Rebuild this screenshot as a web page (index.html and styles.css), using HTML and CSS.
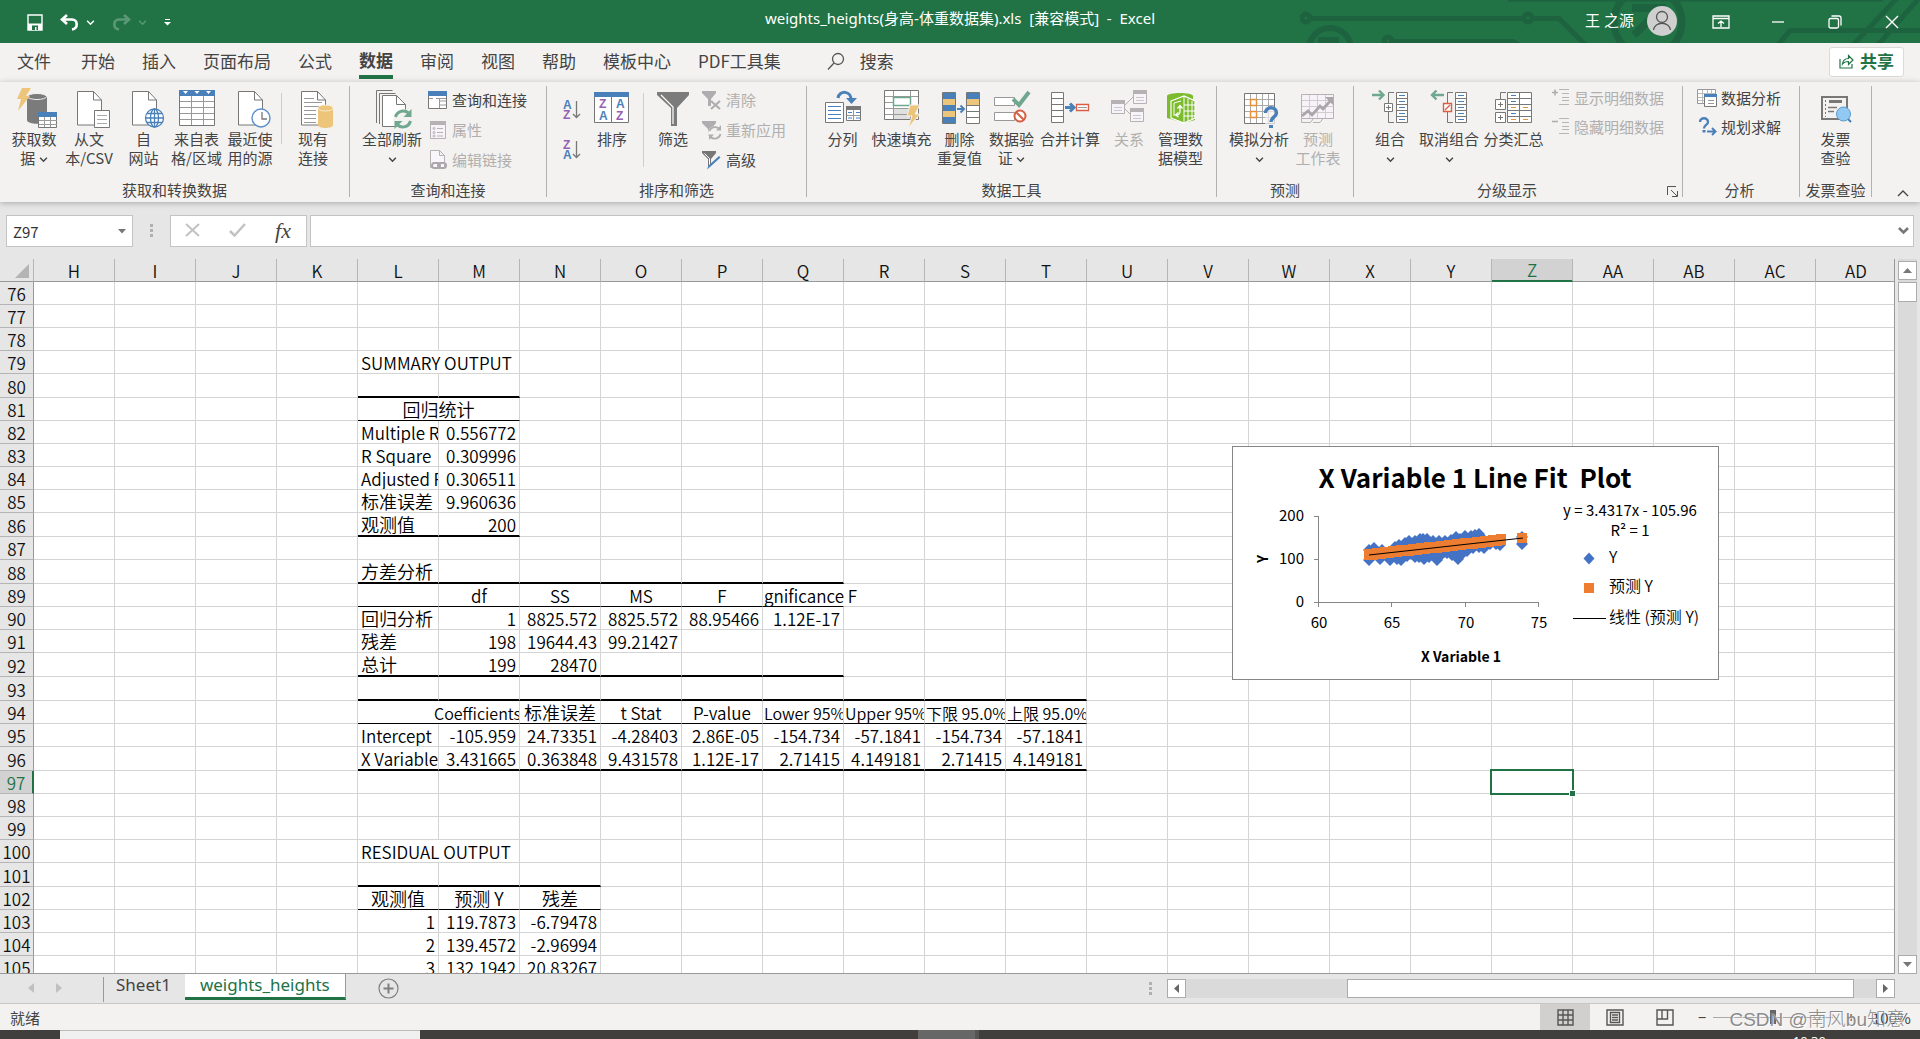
FILE: index.html
```html
<!DOCTYPE html>
<html lang="zh-CN">
<head>
<meta charset="utf-8">
<title>weights_heights(身高-体重数据集).xls - Excel</title>
<link rel="stylesheet" href="styles.css">
</head>
<body>
<svg class="defs" aria-hidden="true">
  <symbol id="page" viewBox="0 0 40 40"><path d="M8.500 3.500h16l8 8.500v25h-24z" fill="#fff" stroke="#777"/><path d="M24.500 3.500v8.500h8" fill="none" stroke="#777"/></symbol>
  <symbol id="down" viewBox="0 0 8 8"><path d="M1 2.500l3 3 3-3" fill="none" stroke="currentColor" stroke-width="1.300"/></symbol>
  <symbol id="funnel" viewBox="0 0 40 40"><path d="M4 4h32v3L24 20v18h-6V20L4 7z" fill="#7b7b7b"/><path d="M8 7l12 12v17" fill="none" stroke="#fff" stroke-width="1.200"/></symbol>
</svg>

<header class="titlebar">
  <svg class="circuit" width="620" height="43" viewBox="1300 0 620 43" aria-hidden="true" fill="none" stroke="#1e633f" stroke-width="5">
    <circle cx="1306" cy="18" r="4"/><path d="M1311 18.500h213M1532 18.500h27l27 27M1393 41.500h120l8 5M1778 45l12-14.500h135M1853 45l45-48M1878 45l42-48"/>
    <circle cx="1330" cy="49" r="21" stroke-width="6"/><path d="M1318 41h21" stroke-width="8"/><circle cx="1388" cy="41" r="4"/><circle cx="1528" cy="18" r="4"/>
    <circle cx="1648" cy="22" r="34" stroke-width="7"/><path d="M1634 35l28-28M1632 8h30v8" stroke-width="8"/><path d="M1508 0h375" stroke-width="3"/>
  </svg>
  <div class="quick">
    <button aria-label="保存"><svg width="16" height="17" viewBox="0 0 16 17"><path d="M1 1h14v15H1z" fill="none" stroke="#fff" stroke-width="1.400"/><path d="M1 9.500h14V16H1z" fill="#fff"/><path d="M5 11.500h6V16H9.500v-3H8v3H5z" fill="#217346"/></svg></button>
    <button class="undo" aria-label="撤消"><svg width="19" height="17" viewBox="0 0 19 17"><path d="M7 1L2 5.500 7 10M2.500 5.500H12c6 0 6.500 9 0 10" fill="none" stroke="#fff" stroke-width="2.600"/></svg><svg width="9" height="9" viewBox="0 0 8 8"><use href="#down"/></svg></button>
    <button class="redo" aria-label="恢复"><svg width="19" height="17" viewBox="0 0 19 17"><path d="M12 1l5 4.500-5 4.500M16.500 5.500H7c-6 0-6.500 9 0 10" fill="none" stroke="currentColor" stroke-width="2.600"/></svg><svg width="9" height="9" viewBox="0 0 8 8"><use href="#down"/></svg></button>
    <button aria-label="自定义快速访问工具栏"><svg width="7" height="7" viewBox="0 0 7 7"><path d="M1 .500h5" stroke="#fff"/><path d="M0 3h7L3.500 6.500z" fill="#fff"/></svg></button>
  </div>
  <h1 class="doc-title">weights_heights(身高-体重数据集).xls&nbsp; [兼容模式]&nbsp; -&nbsp; Excel</h1>
  <div class="account">
    <span>王 之源</span>
    <svg width="30" height="30" viewBox="0 0 30 30"><circle cx="15" cy="15" r="15" fill="#cfcfcf"/><circle cx="15" cy="11" r="5.500" fill="none" stroke="#555" stroke-width="1.300"/><path d="M6.500 24c1-9 16-9 17 0" fill="none" stroke="#555" stroke-width="1.300"/></svg>
  </div>
  <div class="window-buttons">
    <button aria-label="功能区显示选项"><svg width="18" height="14" viewBox="0 0 18 14" fill="none" stroke="#fff" stroke-width="1.300"><path d="M1 1h16v12H1zM1 3.500h16M9 12V6M6 8.500L9 6l3 2.500"/></svg></button>
    <button aria-label="最小化"><svg width="14" height="14" viewBox="0 0 14 14"><path d="M1 7h12" stroke="#fff" stroke-width="1.300"/></svg></button>
    <button aria-label="还原"><svg width="14" height="14" viewBox="0 0 14 14" fill="none" stroke="#fff" stroke-width="1.300"><rect x="1" y="3.500" width="9.500" height="9.500" rx="1.500"/><path d="M3.500 1H11q2 0 2 2v7.500"/></svg></button>
    <button aria-label="关闭"><svg width="14" height="14" viewBox="0 0 14 14"><path d="M1 1l12 12M13 1L1 13" stroke="#fff" stroke-width="1.400"/></svg></button>
  </div>
</header>

<nav class="tabs">
  <button class="file">文件</button><button>开始</button><button>插入</button><button>页面布局</button><button>公式</button><button class="active">数据</button><button>审阅</button><button>视图</button><button>帮助</button><button>模板中心</button><button>PDF工具集</button>
  <button class="search"><svg width="18" height="18" viewBox="0 0 18 18" fill="none" stroke="#555" stroke-width="1.300"><circle cx="11" cy="7" r="5.500"/><path d="M7 11l-6 6.500"/></svg>搜索</button>
  <button class="share"><svg width="15" height="15" viewBox="0 0 15 15" fill="none" stroke="#217346" stroke-width="1.200"><path d="M1 5v9h12v-4M3.500 10C4 6 6 4.500 9.500 4.500V1.500L14 6l-4.500 4.500V7.500C7 7.500 5 8 3.500 10z"/></svg>共享</button>
</nav>

<section class="ribbon">
  <div class="group g-get">
    <div class="tools">
      <button class="big w54"><svg viewBox="0 0 40 40"><path d="M13 8v24c0 5 20 5 20 0V8z" fill="#7b7b7b"/><ellipse cx="23" cy="8.500" rx="9.500" ry="3" fill="#7b7b7b" stroke="#f3f2f1"/><path d="M8 0h9l-5 8h4L4 23l3-12H3z" fill="#edc57a"/><path d="M24.500 24.500h18v15h-18z" fill="#fff" stroke="#777"/><path d="M24 24h19v5H24z" fill="#4a80ba"/><path d="M30.500 29v10M36.500 29v10M25 32.500h18M25 36.500h18" stroke="#999"/></svg>获取数<br>据 <svg class="dd"><use href="#down"/></svg></button>
      <button class="big w56"><svg viewBox="0 0 40 40"><use href="#page"/><path d="M25.500 22.500h15v17h-15z" fill="#fff" stroke="#777"/><path d="M28 27.500h10M28 31.500h10M28 35.500h10" stroke="#aaa"/></svg>从文<br>本/CSV</button>
      <button class="big w53"><svg viewBox="0 0 40 40"><use href="#page"/><g fill="#fff" stroke="#4a80ba" stroke-width="1.300"><circle cx="30.500" cy="30" r="9"/><ellipse cx="30.500" cy="30" rx="4" ry="9"/><path d="M21.500 30h18M23 25.500h15M23 34.500h15M30.500 21v18"/></g></svg>自<br>网站</button>
      <button class="big w53"><svg viewBox="0 0 40 40"><path d="M2.500 2.500h35v35h-35z" fill="#fff" stroke="#777"/><path d="M2 2h36v6H2z" fill="#4a80ba"/><path d="M6 3h5l-2.500 3zM17.500 3h5L20 6zM29 3h5l-2.500 3z" fill="#fff"/><path d="M14.500 8v29M26.500 8v29M3 13.500h34M3 19.500h34M3 25.500h34M3 31.500h34" stroke="#999"/></svg>来自表<br>格/区域</button>
      <button class="big w54"><svg viewBox="0 0 40 40"><use href="#page"/><circle cx="31" cy="30" r="9" fill="#fff" stroke="#5b8fc9" stroke-width="1.400"/><path d="M32 24v7h5" fill="none" stroke="#777" stroke-width="1.300"/></svg>最近使<br>用的源</button>
      <i class="rule short"></i>
      <button class="big w54"><svg viewBox="0 0 40 40"><use href="#page"/><path d="M11 10.500h10M11 14.500h18M11 18.500h18M11 22.500h12M11 26.500h12M11 30.500h12M11 34.500h12" stroke="#999"/><path d="M25 20v17c0 4 15 4 15 0V20z" fill="#edc57a"/><ellipse cx="32.500" cy="20" rx="7.500" ry="3" fill="#edc57a" stroke="#f7ecd4"/></svg>现有<br>连接</button>
    </div>
    <h2>获取和转换数据</h2>
  </div>

  <div class="group g-conn">
    <div class="tools">
      <button class="big w64"><svg viewBox="0 0 40 40"><path d="M4.500 35V2.500h16M7.500 36V5.500h16" fill="none" stroke="#777"/><path d="M10.500 7.500h14l9 9v22h-23z" fill="#fff" stroke="#777"/><path d="M24.500 7.500v9h9" fill="none" stroke="#777"/><circle cx="31" cy="31" r="10" fill="#f3f2f1"/><path d="M23.500 29a8 8 0 0 1 13-4M38.500 33a8 8 0 0 1-13 4" fill="none" stroke="#6fa88f" stroke-width="3"/><path d="M39.500 21v8h-8zM22.500 41v-8h8z" fill="#6fa88f"/></svg>全部刷新<br><svg class="dd"><use href="#down"/></svg></button>
      <div class="stack">
        <button><svg viewBox="0 0 20 20"><path d="M.500 1.500h18v17H.500z" fill="#fff" stroke="#777"/><path d="M0 1h19v5H0z" fill="#4a80ba"/><path d="M11.500 9v9M12 11h6M12 15h6M8 8.500h10M1 8.500h4" stroke="#999"/></svg>查询和连接</button>
        <button disabled><svg viewBox="0 0 20 20"><path d="M2.500 1.500h15v17h-15z" fill="#f6f4f8" stroke="#b5b1b5"/><path d="M2 1h16v4H2z" fill="#b5b1b5"/><path d="M9 8.500h6M9 12.500h6M9 16h6" stroke="#b5b1b5"/><g fill="none" stroke="#b5b1b5"><circle cx="6" cy="8.500" r="1"/><circle cx="6" cy="12.500" r="1"/><circle cx="6" cy="16" r="1"/></g></svg>属性</button>
        <button disabled><svg viewBox="0 0 20 20"><path d="M2.500.500h9l5 5v12h-14zM11.500.500v5h5" fill="#f8f6fa" stroke="#b5b1b5"/><g fill="none" stroke="#aaa6aa" stroke-width="2"><rect x="4" y="13" width="8" height="5" rx="2.500"/><rect x="10" y="13" width="8" height="5" rx="2.500"/></g></svg>编辑链接</button>
      </div>
    </div>
    <h2>查询和连接</h2>
  </div>

  <div class="group g-sort">
    <div class="tools">
      <div class="az">
        <button aria-label="升序"><svg width="18" height="20" viewBox="0 0 18 20"><text x="0" y="9" class="blue">A</text><text x="0" y="19" class="violet">Z</text><path d="M13.500 1v16M10 14l3.500 3.500L17 14" fill="none" stroke="#777" stroke-width="1.300"/></svg></button>
        <button aria-label="降序"><svg width="18" height="20" viewBox="0 0 18 20"><text x="0" y="9" class="violet">Z</text><text x="0" y="19" class="blue">A</text><path d="M13.500 1v16M10 14l3.500 3.500L17 14" fill="none" stroke="#777" stroke-width="1.300"/></svg></button>
      </div>
      <button class="big w54"><svg viewBox="0 0 40 40"><path d="M2.500 4.500h34v30h-34z" fill="#fff" stroke="#777"/><path d="M2 4h35v5H2z" fill="#4a80ba"/><path d="M19.500 9v26" stroke="#777"/><text x="7" y="20" class="violet">Z</text><text x="7" y="32" class="blue">A</text><text x="24" y="20" class="blue">A</text><text x="24" y="32" class="violet">Z</text></svg>排序</button>
      <i class="rule tall"></i>
      <button class="big w50"><svg viewBox="0 0 40 40"><use href="#funnel"/></svg>筛选</button>
      <div class="stack">
        <button disabled><svg viewBox="0 0 20 20"><path d="M0 1h14v2L9 9v7H6V9L0 3z" fill="#b0adb0"/><path d="M9 11l9 8M18 11l-9 8" stroke="#b0adb0" stroke-width="2.200"/></svg>清除</button>
        <button disabled><svg viewBox="0 0 20 20"><path d="M0 1h14v2L9 9v7H6V9L0 3z" fill="#b0adb0"/><circle cx="13" cy="13" r="7" fill="#f3f2f1"/><path d="M7.500 11a6 6 0 0 1 10-2M18.500 14a6 6 0 0 1-10 3" fill="none" stroke="#b0adb0" stroke-width="1.800"/><path d="M19 5v5.500h-5zM7 20v-5.500h5z" fill="#b0adb0"/></svg>重新应用</button>
        <button><svg viewBox="0 0 20 20"><path d="M0 1h14v2L9 9v7H6V9L0 3z" fill="#777"/><path d="M2.500 3.500L7.500 8.500V15" fill="none" stroke="#fff"/><path d="M18.500 7.500L8 17l-3 2.500 1.500-4L17 6z" fill="#4a80ba"/></svg>高级</button>
      </div>
    </div>
    <h2>排序和筛选</h2>
  </div>

  <div class="group g-tools">
    <div class="tools">
      <button class="big w57"><svg viewBox="0 0 40 40"><path d="M2.500 14.500h18v20h-18z" fill="#fff" stroke="#777"/><path d="M5 18.500h13M5 22.500h13M5 26.500h13M5 30.500h13" stroke="#4a80ba"/><path d="M23.500 18.500h14v14h-14z" fill="#fff" stroke="#777"/><path d="M23 18h15v4H23z" fill="#777"/><path d="M30.500 22v10M24 27.500h13" stroke="#999"/><path d="M25 24.500h4M33 24.500h4M25 30h4M33 30h4" stroke="#4a80ba"/><path d="M15 10c1-8 14-8 13 3" fill="none" stroke="#4a80ba" stroke-width="3"/><path d="M23 10h11l-5.500 6z" fill="#4a80ba"/></svg>分列</button>
      <button class="big w61"><svg viewBox="0 0 40 40"><path d="M2.500 2.500h34v29h-34z" fill="#fff" stroke="#777"/><path d="M12 20h17v11H12z" fill="#e0e0e0"/><path d="M11.500 3v6M11.500 18v13M28.500 3v6M28.500 18v13M3 8.500h33M3 14.500h8M3 20.500h33M3 26.500h33" stroke="#999"/><path d="M11.500 9.500h17v8h-17z" fill="#fff" stroke="#6fa88f" stroke-width="1.500"/><path d="M28 17h10l-5 9h5L26 40l4-12h-5z" fill="#edc57a" stroke="#f3f2f1"/></svg>快速填充</button>
      <button class="big w55"><svg viewBox="0 0 40 40"><path d="M2.500 4.500h13v31h-13zM26.500 4.500h13v31h-13z" fill="#fff" stroke="#777"/><path d="M3 5h12v6H3zM3 17h12v6H3zM3 29h12v6H3zM27 5h12v6H27z" fill="#4a80ba"/><path d="M3 11h12v6H3zM3 23h12v6H3zM27 11h12v6H27z" fill="#edc57a"/><path d="M27 17.500h12M27 23.500h12M27 29.500h12" stroke="#777"/><path d="M17 21h6M20.500 17.500L24 21l-3.500 3.500" fill="none" stroke="#4a80ba" stroke-width="2"/></svg>删除<br>重复值</button>
      <button class="big w49"><svg viewBox="0 0 40 40"><path d="M2.500 9.500h20v8h-20zM2.500 24.500h20v8h-20z" fill="#fff" stroke="#999"/><path d="M21 11l6 6L37 4" fill="none" stroke="#6fa88f" stroke-width="4"/><circle cx="28" cy="28" r="5.500" fill="#fff" stroke="#d65f44" stroke-width="2"/><path d="M24 24l8 8" stroke="#d65f44" stroke-width="2"/></svg>数据验<br>证 <svg class="dd"><use href="#down"/></svg></button>
      <button class="big w68"><svg viewBox="0 0 40 40"><path d="M1.500 4.500h12v30h-12z" fill="#fff" stroke="#777"/><path d="M2 10.500h11M2 16.500h11M2 22.500h11M2 28.500h11" stroke="#777"/><path d="M15 19.500h7M20 15.500l4 4-4 4" fill="none" stroke="#4a80ba" stroke-width="3"/><path d="M26.500 16.500h12v6h-12z" fill="#fff" stroke="#d65f44" stroke-width="1.300"/><path d="M28 19.500h9" stroke="#999"/></svg>合并计算</button>
      <button class="big w50" disabled><svg viewBox="0 0 40 40"><path d="M15 18l10-10M15 20l6 6" stroke="#b5b1b5" fill="none"/><g fill="#f6f4f8" stroke="#b5b1b5"><path d="M2.500 12.500h13v13h-13zM24.500 2.500h13v13h-13zM21.500 20.500h13v13h-13z"/></g><path d="M2 12h14v4H2zM24 2h14v4H24zM21 20h14v4H21z" fill="#b5b1b5"/><path d="M5 19.500h8M5 22.500h8M27 9.500h8M27 12.500h8M24 27.500h8M24 30.500h8" stroke="#cbc8cb"/></svg>关系</button>
      <button class="big w53"><svg viewBox="0 0 40 40"><path d="M6 8c0-4 26-4 26 0v5l2 1v18l-11 3-17-5z" fill="#7cbb2d"/><path d="M10 13l13-5 11 5v17l-11 5-13-5z" fill="#7cbb2d" stroke="#fff" stroke-width="1.200"/><path d="M23 8v27M27 11v22M31 13v19M23 17h11M23 23h11M23 28h11M13 15v13M13 15l7-2" stroke="#fff" fill="none"/><path d="M15 27c5 1 4-5 4-9M16.500 20.500l2.500-3 2.500 3M17.500 24.500l-3 2.500 3 2" fill="none" stroke="#fff" stroke-width="1.300"/></svg>管理数<br>据模型</button>
    </div>
    <h2>数据工具</h2>
  </div>

  <div class="group g-forecast">
    <div class="tools">
      <button class="big w64"><svg viewBox="0 0 40 40"><path d="M5.500 5.500h30v30h-30z" fill="#fff" stroke="#777"/><path d="M11.500 6v29M17.500 6v29M23.500 6v29M29.500 6v29M6 11.500h29M6 17.500h29M6 23.500h29M6 29.500h29" stroke="#aaa"/><path d="M11.500 11.500h6v6h-6zM11.500 23.500h6v6h-6z" fill="#fff" stroke="#e8913c" stroke-width="1.500"/><path d="M26 19h13v20H26z" fill="#f3f2f1" opacity=".7"/><path d="M26.500 25c0-7 11-7 11 0 0 4-5.500 4-5.500 9" fill="none" stroke="#4a80ba" stroke-width="3.400"/><path d="M30 37h4v3h-4z" fill="#4a80ba"/></svg>模拟分析<br><svg class="dd"><use href="#down"/></svg></button>
      <button class="big w54" disabled><svg viewBox="0 0 40 40"><path d="M3.500 6.500h32v24h-32z" fill="#f6f2f8" stroke="#b5b1b5"/><path d="M11.500 7v23M19.500 7v23M27.500 7v23M4 12.500h31M4 18.500h31M4 24.500h31" stroke="#d0ccd0"/><path d="M3.500 31v3.500h9l3-4M15 34.500h7l3-4" fill="none" stroke="#b5b1b5"/><path d="M4 28l6-5 4 4 8-9 3 3 9-10" fill="none" stroke="#aaa6aa" stroke-width="2.800"/><path d="M27 9h8v8z" fill="#aaa6aa"/></svg>预测<br>工作表</button>
    </div>
    <h2>预测</h2>
  </div>

  <div class="group g-outline">
    <div class="tools">
      <button class="big w50"><svg viewBox="0 0 40 40"><path d="M2 7h11M9 2.500L13.500 7 9 11.500" fill="none" stroke="#6fa88f" stroke-width="2.400"/><path d="M24 4.500h-5.500v30H24" fill="none" stroke="#777"/><path d="M26.500 4.500h11v30h-11zM14.500 15.500h8v8h-8z" fill="#fff" stroke="#777"/><path d="M27 10.500h10M27 16.500h10M27 22.500h10M27 28.500h10M16 19.500h5M18.500 17v5" stroke="#777"/><path d="M29 7.500h6M29 13.500h6M29 19.500h6M29 25.500h6M29 31.500h6" stroke="#4a80ba"/></svg>组合<br><svg class="dd"><use href="#down"/></svg></button>
      <button class="big w68"><svg viewBox="0 0 40 40"><path d="M3 7h12M7.500 2.500L3 7l4.500 4.500" fill="none" stroke="#6fa88f" stroke-width="2.400"/><path d="M24 4.500h-5.500v30H24" fill="none" stroke="#777"/><path d="M26.500 4.500h11v30h-11z" fill="#fff" stroke="#777"/><path d="M27 10.500h10M27 16.500h10M27 22.500h10M27 28.500h10" stroke="#777"/><path d="M29 7.500h6M29 13.500h6M29 19.500h6M29 25.500h6M29 31.500h6" stroke="#4a80ba"/><path d="M14.500 15.500h8v8h-8zM16 22l5-5" fill="#fff" stroke="#d65f44" stroke-width="1.400"/></svg>取消组合<br><svg class="dd"><use href="#down"/></svg></button>
      <button class="big w61"><svg viewBox="0 0 40 40"><path d="M12 4.500H6.500V12" fill="none" stroke="#777"/><path d="M13.500 4.500h24v30h-24zM1.500 11.500h10v10h-10zM1.500 24.500h10v10h-10z" fill="#fff" stroke="#777"/><path d="M25.500 5v29M14 10.500h23M14 16.500h23M14 22.500h23M14 28.500h23M4 16.500h5M6.500 14v5M4 29.500h5M6.500 27v5" stroke="#777"/><path d="M17 7.500h5M17 13.500h5M17 25.500h5" stroke="#4a80ba"/><path d="M17 19.500h5M29 19.500h5M17 31.500h5M29 31.500h5" stroke="#e8913c"/></svg>分类汇总</button>
      <div class="stack tight">
        <button disabled><svg viewBox="0 0 20 20"><path d="M2 4.500h6M5 1.500v6" stroke="#b0adb0" stroke-width="1.600"/><path d="M9 1.500h10M12 5.500h7M12 9.500h7M12 12.500h7M9 16.500h10" stroke="#b8b5b8"/></svg>显示明细数据</button>
        <button disabled><svg viewBox="0 0 20 20"><path d="M2 4.500h6" stroke="#b0adb0" stroke-width="1.600"/><path d="M9 1.500h10M12 5.500h7M12 9.500h7M12 12.500h7M9 16.500h10" stroke="#b8b5b8"/></svg>隐藏明细数据</button>
      </div>
    </div>
    <h2>分级显示</h2>
    <button class="launcher" aria-label="分级显示设置"><svg width="11" height="11" viewBox="0 0 11 11" fill="none" stroke="#555"><path d="M.500 9V.500H9M4 4l6 6M10.500 5v5.500H5"/></svg></button>
  </div>

  <div class="group g-analysis">
    <div class="tools">
      <div class="stack tight">
        <button><svg viewBox="0 0 20 20"><path d="M.500 1.500h18v14H.500z" fill="#fff" stroke="#999"/><path d="M5.500 2v13M10.500 2v13M14.500 2v13M1 5.500h17M1 9.500h17M1 12.500h17" stroke="#bbb"/><path d="M7.500 7.500h12v11h-12z" fill="#fff" stroke="#777"/><path d="M7 6h13v3H7z" fill="#4a80ba"/><path d="M11 12.500h6M11 15.500h6" stroke="#999"/></svg>数据分析</button>
        <button><svg viewBox="0 0 20 20"><path d="M3 5c0-5 8-5 8 0 0 3-4 3-4 6.500" fill="none" stroke="#4a80ba" stroke-width="2.300"/><path d="M5.500 13h3v2.500h-3z" fill="#4a80ba"/><path d="M10 14.500h8M15 11l3.500 3.500L15 18" fill="none" stroke="#4a80ba" stroke-width="2"/></svg>规划求解</button>
      </div>
    </div>
    <h2>分析</h2>
  </div>

  <div class="group g-invoice">
    <div class="tools">
      <button class="big w61"><svg viewBox="0 0 40 40"><path d="M6 9h25v22H6z" fill="none" stroke="#777" stroke-width="2"/><path d="M9.500 12v17" stroke="#777" stroke-dasharray="2 2"/><path d="M13 13.500h13" stroke="#777" stroke-width="3"/><path d="M12 19.500h9M12 23.500h6" stroke="#777" stroke-width="1.500"/><path d="M30 29l5 5" stroke="#3f7fb5" stroke-width="2"/><circle cx="27.500" cy="26" r="7" fill="#92c9f2" stroke="#5a9bcf"/></svg>发票<br>查验</button>
    </div>
    <h2>发票查验</h2>
  </div>
  <button class="collapse" aria-label="折叠功能区"><svg width="12" height="8" viewBox="0 0 12 8"><path d="M1 7l5-5 5 5" fill="none" stroke="#444" stroke-width="1.300"/></svg></button>
</section>

<section class="formula">
  <div class="namebox"><input aria-label="名称框" value="Z97"><svg width="8" height="5" viewBox="0 0 8 5"><path d="M0 0h8L4 4.500z" fill="#777"/></svg></div>
  <svg class="grip" width="3" height="14" viewBox="0 0 3 14"><path d="M0 0h3v3H0zM0 5h3v3H0zM0 10h3v3H0z" fill="#b0b0b0"/></svg>
  <div class="fx">
    <button aria-label="取消"><svg width="15" height="14" viewBox="0 0 15 14"><path d="M1 1l13 12M14 1L1 13" stroke="#c2c2c2" stroke-width="2"/></svg></button>
    <button aria-label="输入"><svg width="17" height="14" viewBox="0 0 17 14"><path d="M1 8l4.500 4.500L16 1" fill="none" stroke="#c2c2c2" stroke-width="2.500"/></svg></button>
    <button class="fn">fx</button>
  </div>
  <div class="entry"><input aria-label="编辑栏"><svg width="11" height="8" viewBox="0 0 11 8"><path d="M1 1l4.500 4.500L10 1" fill="none" stroke="#777" stroke-width="2.600"/></svg></div>
</section>

<main class="workspace">
  <div class="sheet">
    <table class="cells"></table>
    <figure class="chart">
      <svg width="485" height="232" viewBox="0 0 485 232">
        <text class="heading" x="242" y="41" xml:space="preserve">X Variable 1 Line Fit  Plot</text>
        <g stroke="#868686" fill="none"><path d="M85.500 69.500v86M81 69.500h5M81 112.500h5M81 155.500h224.500M85.500 155v5M158.500 155v5M232.500 155v5M305.500 155v5"/></g>
        <g class="end"><text x="71" y="74">200</text><text x="71" y="117">100</text><text x="71" y="160">0</text></g>
        <g class="mid"><text x="86" y="181">60</text><text x="159" y="181">65</text><text x="233" y="181">70</text><text x="306" y="181">75</text></g>
        <text class="axis" x="228" y="215">X Variable 1</text>
        <text class="axis" transform="translate(35 112) rotate(-90)">Y</text>
        <g class="observed"></g>
        <g class="predicted"></g>
        <path d="M136 108L290 91" stroke="#000"/>
        <g class="mid"><text x="397" y="69">y = 3.4317x - 105.96</text><text x="397" y="89">R² = 1</text></g>
        <path d="M356 105.500l5.500 6-5.500 6-5.500-6z" fill="#4472c4"/><path d="M351 136h10v10h-10z" fill="#ed7d31"/><path d="M340 171.500h33" stroke="#000"/>
        <g class="key"><text x="376" y="116">Y</text><text x="376" y="145">预测 Y</text><text x="376" y="176">线性 (预测 Y)</text></g>
      </svg>
    </figure>
  </div>
  <div class="vscroll">
    <button aria-label="向上滚动"><svg width="9" height="5" viewBox="0 0 9 5"><path d="M0 5h9L4.500 0z" fill="#777"/></svg></button>
    <div class="thumb"></div>
    <button aria-label="向下滚动"><svg width="9" height="5" viewBox="0 0 9 5"><path d="M0 0h9L4.500 5z" fill="#777"/></svg></button>
  </div>
</main>

<footer class="sheetbar">
  <div class="steps"><svg width="6" height="10" viewBox="0 0 6 10"><path d="M6 0v10L0 5z" fill="#c0c0c0"/></svg><svg width="6" height="10" viewBox="0 0 6 10"><path d="M0 0v10l6-5z" fill="#c0c0c0"/></svg></div>
  <button class="sheet-tab">Sheet1</button><button class="sheet-tab current">weights_heights</button>
  <button class="add" aria-label="新工作表"><svg width="21" height="21" viewBox="0 0 21 21" fill="none" stroke="#808080"><circle cx="10.500" cy="10.500" r="9.500" stroke-width="1.200"/><path d="M5.500 10.500h10M10.500 5.500v10" stroke-width="2"/></svg></button>
  <div class="hscroll">
    <svg class="grip" width="3" height="14" viewBox="0 0 3 14"><path d="M0 0h3v3H0zM0 5h3v3H0zM0 10h3v3H0z" fill="#b0b0b0"/></svg>
    <button aria-label="向左滚动"><svg width="5" height="9" viewBox="0 0 5 9"><path d="M5 0v9L0 4.500z" fill="#666"/></svg></button>
    <div class="track"><div class="thumb"></div></div>
    <button aria-label="向右滚动"><svg width="5" height="9" viewBox="0 0 5 9"><path d="M0 0v9l5-4.500z" fill="#666"/></svg></button>
  </div>
</footer>

<footer class="status">
  <span class="ready">就绪</span>
  <div class="views">
    <button class="on" aria-label="普通"><svg width="17" height="17" viewBox="0 0 17 17" fill="none" stroke="#555" stroke-width="1.400"><path d="M1 1h15v15H1zM6 1v15M11 1v15M1 6h15M1 11h15"/></svg></button>
    <button aria-label="页面布局"><svg width="18" height="17" viewBox="0 0 18 17" fill="none" stroke="#555" stroke-width="1.400"><path d="M1 1h16v15H1zM4.500 3.500h9v10h-9zM6 6h6M6 8.500h6M6 11h6"/></svg></button>
    <button aria-label="分页预览"><svg width="18" height="17" viewBox="0 0 18 17" fill="none" stroke="#555" stroke-width="1.400"><path d="M1 1h16v15H1zM6 1v9M1 10h10.500V1"/></svg></button>
  </div>
  <div class="zoom"><button aria-label="缩小">−</button><input type="range" aria-label="显示比例" min="0" max="100" value="50"><button aria-label="放大">+</button><span>100%</span></div>
  <div class="watermark">CSDN @南风bu知意</div>
</footer>
<div class="taskbar"><i class="window"></i><i class="app"></i><span class="clock">10:30</span></div>
<script src="script.js"></script>
</body>
</html>
```
FILE: styles.css
```css
* { box-sizing: border-box; }
body {
  margin: 0; height: 100vh; overflow: hidden;
  display: flex; flex-direction: column;
  background: #e6e6e6; color: #444;
  font: 15px "Noto Sans", "Noto Sans CJK SC", sans-serif;
}
button { margin: 0; padding: 0; border: 0; background: none; color: inherit; font: inherit; white-space: nowrap; }
input { min-width: 0; border: 0; outline: 0; background: none; font: inherit; }
h1, h2, figure { margin: 0; font-weight: 400; }
.defs { position: absolute; width: 0; height: 0; }

.titlebar { position: relative; flex: none; height: 43px; display: grid; grid-template-columns: 1fr auto 1fr; align-items: center; background: #217346; color: #fff; }
.circuit { position: absolute; right: 0; top: 0; }
.quick { display: flex; align-items: center; gap: 17px; padding: 2px 0 0 27px; }
.quick button { display: flex; align-items: center; gap: 7px; }
.quick .redo { color: #5b9876; }
.doc-title { position: relative; font-size: 15px; line-height: 36px; align-self: start; }
.account { position: absolute; right: 243px; top: 6px; display: flex; align-items: center; gap: 13px; line-height: 26px; }
.account span { padding-bottom: 3px; }
.window-buttons { position: relative; justify-self: end; display: flex; }
.window-buttons button { width: 57px; height: 42px; display: grid; place-items: center; }

.tabs { flex: none; height: 39px; padding: 0 16px 0 17px; display: flex; gap: 27px; background: #f3f2f1; font-size: 17px; line-height: 32px; font-family: "Noto Sans CJK SC", sans-serif; }
.tabs button { padding-bottom: 4px; }
.tabs .file { margin-right: 3px; }
.tabs .active { font-weight: 700; border-bottom: 4px solid #217346; height: 36px; padding: 1px 0 0; }
.tabs .search { margin-left: 19px; display: flex; align-items: center; gap: 15px; height: 39px; }
.tabs .share { margin: 4px 0 0 auto; width: 75px; height: 30px; line-height: 24px; padding: 0 0 2px; display: flex; justify-content: center; align-items: center; gap: 6px; background: #fff; border: 1px solid #dcdad8; border-radius: 3px; color: #217346; font-weight: 700; }

.ribbon { position: relative; z-index: 1; flex: none; height: 120px; padding-top: 4px; display: flex; background: #f3f2f1; box-shadow: 0 1px 6px #0004; font: 15px/19px "Noto Sans CJK SC", sans-serif; }
.group { position: relative; height: 111px; border-right: 1px solid #b1b1b1; display: flex; flex-direction: column; }
.tools { flex: 1; display: flex; align-items: flex-start; padding-top: 2px; }
.group h2 { text-align: center; font-size: 15px; line-height: 22px; margin-bottom: -4px; }
.g-get { width: 350px; } .g-get .tools { padding-left: 7px; }
.g-conn { width: 197px; } .g-conn .tools { padding-left: 10px; }
.g-sort { width: 260px; } .g-sort .tools { padding-left: 14px; }
.g-tools { width: 410px; } .g-tools .tools { padding-left: 7px; }
.g-forecast { width: 137px; } .g-forecast .tools { padding-left: 10px; }
.g-outline { width: 329px; } .g-outline .tools { padding-left: 11px; } .g-outline h2 { padding-right: 22px; }
.g-analysis { width: 117px; } .g-analysis .tools { padding-left: 14px; } .g-analysis h2 { padding-right: 3px; }
.g-invoice { width: 72px; } .g-invoice .tools { padding-left: 5px; }
.big { line-height: 19px; text-align: center; }
.big > svg:first-child { display: block; width: 40px; height: 40px; margin: 0 auto 1px; overflow: visible; }
.big .dd { width: 9px; height: 9px; }
button:disabled { color: #b1afad; }
.w49 { width: 49px; } .w50 { width: 50px; } .w53 { width: 53px; } .w54 { width: 54px; } .w55 { width: 55px; } .w56 { width: 56px; }
.w57 { width: 57px; } .w61 { width: 61px; } .w64 { width: 64px; } .w68 { width: 68px; }
.rule { width: 1px; margin: 5px 4px 0; background: #d0cecc; }
.rule.short { height: 51px; }
.rule.tall { height: 74px; }
.stack { display: flex; flex-direction: column; padding-left: 4px; }
.stack button { height: 30px; padding-bottom: 7px; display: flex; align-items: center; gap: 4px; }
.stack svg { width: 20px; height: 20px; }
.stack.tight { padding-left: 6px; }
.g-analysis .stack.tight { padding-left: 0; }
.stack.tight button { height: 29px; padding-bottom: 10px; }
.az { width: 24px; display: flex; flex-direction: column; gap: 20px; padding: 12px 0 0 2px; }
.az button { height: 20px; }
.az svg { display: block; overflow: visible; }
.az svg text, .big svg text { font: bold 12px "Liberation Sans", sans-serif; }
.blue { fill: #4a80ba; }
.violet { fill: #9460b0; }
.launcher { position: absolute; right: 4px; bottom: 0; line-height: 0; }
.collapse { align-self: flex-end; margin: 0 11px 2px auto; }

.formula { flex: none; height: 57px; padding: 13px 6px 12px; display: flex; align-items: stretch; }
.namebox, .fx, .entry { display: flex; align-items: center; background: #fff; border: 1px solid #c4c4c4; }
.namebox { width: 127px; padding-right: 6px; font: 15px "Noto Sans CJK SC", sans-serif; }
.namebox input { flex: 1; padding: 0 6px; color: #333; }
.grip { flex: none; align-self: center; margin: 0 17px; }
.fx { width: 137px; justify-content: space-between; padding: 0 15px 0 14px; }
.fn { font: italic 22px "Liberation Serif", serif; color: #444; }
.entry { flex: 1; margin-left: 3px; padding-right: 4px; }
.entry input { flex: 1; }

.workspace { flex: 1; min-height: 0; display: flex; gap: 3px; padding-right: 3px; }
.sheet { position: relative; flex: 1; overflow: hidden; border-right: 1px solid #999; border-bottom: 1px solid #999; background: #fff; }
.cells { width: 1978px; table-layout: fixed; border-collapse: separate; border-spacing: 0; color: #000; font: 350 17px/20px "Noto Sans CJK SC", sans-serif; }
.cells th, .cells td { height: 23px; padding: 1px 3px 0; overflow: hidden; white-space: nowrap; border-right: 1px solid #d4d4d4; border-bottom: 1px solid #d4d4d4; text-align: left; }
.cells th { padding: 1px 0 0; text-align: center; font-weight: 350; background: #e6e6e6; color: #111; border-color: #b5b5b5; }
.cells thead th { border-bottom-color: #999; }
.cells tbody th { border-right-color: #999; }
.cells th.on { background: #d2d2d2; color: #217346; }
.cells thead th.on { border-bottom: 2px solid #217346; }
.cells tbody th.on { border-right: 2px solid #217346; }
.cells .tall > * { height: 24px; padding-top: 2px; }
.cells td.num { text-align: right; }
.cells td.ctr { text-align: center; padding: 1px 0 0; }
.cells td.zh { font-size: 18px; padding-top: 0; }
.cells td.thick { border-bottom: 2px solid #000; }
.cells td.thin { border-bottom-color: #000; }
.cells td.spill { overflow: visible; border-right-color: transparent; padding-left: 1px; }
.cells td.coef { padding-left: 76px; font-size: 16px; }
.cells td.tight { padding-left: 1px; padding-right: 0; font-size: 16px; }
.cells td.picked { position: relative; overflow: visible; }
.picked::before { content: ""; position: absolute; inset: -2px; border: 2px solid #217346; }
.picked::after { content: ""; position: absolute; right: -3px; bottom: -3px; width: 5px; height: 5px; background: #217346; outline: 1px solid #fff; }
.corner { width: 0; border: 7px solid #b4b4b4; border-left-color: transparent; border-top-color: transparent; display: inline-block; margin: 3px 0 0 10px; }

.chart { position: absolute; left: 1232px; top: 187px; width: 487px; height: 234px; background: #fff; border: 1px solid #868686; }
.chart text { font: 15px "Noto Sans CJK SC", sans-serif; }
.chart .heading { font-size: 26px; font-weight: 700; text-anchor: middle; }
.chart .axis { font-weight: 700; text-anchor: middle; font-size: 14px; }
.chart .mid text { text-anchor: middle; }
.chart .end text { text-anchor: end; }
.chart .key text { font-size: 16px; font-weight: 350; }

.vscroll { width: 19px; display: flex; flex-direction: column; background: #dadada; padding-top: 2px; }
.vscroll button, .hscroll button { width: 19px; height: 19px; flex: none; display: grid; place-items: center; background: #fff; border: 1px solid #ababab; }
.thumb { background: #fff; border: 1px solid #ababab; }
.vscroll .thumb { height: 20px; margin: 2px 0 auto; }

.sheetbar { flex: none; height: 29px; display: flex; align-items: flex-start; }
.steps { width: 104px; height: 25px; margin-top: 3px; display: flex; gap: 22px; padding: 6px 0 0 28px; border-right: 1px solid #999; }
.sheet-tab { height: 26px; padding: 0 14px 4px 12px; font: 17px/20px "Noto Sans", sans-serif; }
.sheet-tab.current { background: #fff; color: #217346; border-right: 1px solid #999; border-bottom: 3px solid #217346; padding: 0 15px 1px; }
.add { margin: 4px 0 0 32px; line-height: 0; }
.hscroll { margin-left: auto; width: 771px; display: flex; padding: 5px 25px 0 0; }
.hscroll .grip { margin: 0 15px 0 0; }
.track { flex: 1; display: flex; background: #dadada; }
.track .thumb { width: 507px; margin-left: 161px; }

.status { position: relative; flex: none; height: 27px; display: flex; align-items: center; background: #f3f2f1; border-top: 1px solid #c6c6c6; }
.ready { flex: 1; padding-left: 10px; }
.views { display: flex; }
.views button { width: 50px; height: 26px; display: grid; place-items: center; }
.views .on { background: #d2d0ce; }
.zoom { width: 230px; display: flex; align-items: center; padding-left: 6px; }
.zoom button { width: 12px; line-height: 20px; }
.zoom input { appearance: none; width: 120px; height: 14px; margin: 0 12px 0 5px; background: linear-gradient(#aaa, #aaa) center / 100% 1px no-repeat; }
.zoom input::-webkit-slider-thumb { appearance: none; width: 6px; height: 14px; background: #666; }
.zoom span { margin-left: 15px; font-family: "Noto Sans CJK SC", sans-serif; }
.watermark { position: absolute; right: 15px; top: 2px; font: 300 19px/28px "Liberation Sans", "Noto Sans CJK SC", sans-serif; color: #8c8c8c; text-shadow: 1px 1px 0 #fffc; }
.taskbar { flex: none; height: 9px; overflow: hidden; display: flex; background: #403f3e; }
.window { margin-left: 60px; width: 360px; background: #f0f0f0; border-top: 1px solid #bbb; }
.app { margin-left: 498px; width: 61px; background: #686767; border-right: 4px solid #555; }
.clock { margin: 4px 94px 0 auto; font: 13px/15px "Noto Sans", sans-serif; color: #fff; }
```
FILE: script.js
```js
const columns = "H I J K L M N O P Q R S T U V W X Y Z AA AB AC AD AE".split(" ");
const between = (from, to) => columns.slice(columns.indexOf(from), columns.indexOf(to) + 1);

// row -> column -> [text, classes, colspan]
const data = {
  79: { L: ["SUMMARY OUTPUT", "", 2] },
  81: { L: ["回归统计", "ctr zh", 2] },
  82: { L: ["Multiple R"], M: ["0.556772", "num"] },
  83: { L: ["R Square"], M: ["0.309996", "num"] },
  84: { L: ["Adjusted R Square"], M: ["0.306511", "num"] },
  85: { L: ["标准误差", "zh"], M: ["9.960636", "num"] },
  86: { L: ["观测值", "zh"], M: ["200", "num"] },
  88: { L: ["方差分析", "zh"] },
  89: { M: ["df", "ctr"], N: ["SS", "ctr"], O: ["MS", "ctr"], P: ["F", "ctr"], Q: ["gnificance F", "spill"] },
  90: { L: ["回归分析", "zh"], M: ["1", "num"], N: ["8825.572", "num"], O: ["8825.572", "num"], P: ["88.95466", "num"], Q: ["1.12E-17", "num"] },
  91: { L: ["残差", "zh"], M: ["198", "num"], N: ["19644.43", "num"], O: ["99.21427", "num"] },
  92: { L: ["总计", "zh"], M: ["199", "num"], N: ["28470", "num"] },
  94: { L: ["Coefficients", "coef", 2], N: ["标准误差", "ctr zh"], O: ["t Stat", "ctr"], P: ["P-value", "ctr"], Q: ["Lower 95%", "tight"], R: ["Upper 95%", "tight"], S: ["下限 95.0%", "tight"], T: ["上限 95.0%", "tight"] },
  95: { L: ["Intercept"], M: ["-105.959", "num"], N: ["24.73351", "num"], O: ["-4.28403", "num"], P: ["2.86E-05", "num"], Q: ["-154.734", "num"], R: ["-57.1841", "num"], S: ["-154.734", "num"], T: ["-57.1841", "num"] },
  96: { L: ["X Variable 1"], M: ["3.431665", "num"], N: ["0.363848", "num"], O: ["9.431578", "num"], P: ["1.12E-17", "num"], Q: ["2.71415", "num"], R: ["4.149181", "num"], S: ["2.71415", "num"], T: ["4.149181", "num"] },
  97: { Z: ["", "picked"] },
  100: { L: ["RESIDUAL OUTPUT", "", 2] },
  102: { L: ["观测值", "ctr zh"], M: ["预测 Y", "ctr zh"], N: ["残差", "ctr zh"] },
  103: { L: ["1", "num"], M: ["119.7873", "num"], N: ["-6.79478", "num"] },
  104: { L: ["2", "num"], M: ["139.4572", "num"], N: ["-2.96994", "num"] },
  105: { L: ["3", "num"], M: ["132.1942", "num"], N: ["20.83267", "num"] },
};
const rules = {
  80: ["thick", "L", "M"], 81: ["thin", "L", "M"], 86: ["thick", "L", "M"],
  88: ["thick", "L", "Q"], 89: ["thin", "L", "Q"], 92: ["thick", "L", "Q"],
  93: ["thick", "L", "T"], 94: ["thin", "L", "T"], 96: ["thick", "L", "T"],
  101: ["thick", "L", "N"], 102: ["thin", "L", "N"],
};

let html = '<colgroup><col style="width:34px">' + columns.map(() => '<col style="width:81px">').join("") + "</colgroup>";
html += '<thead><tr><th><i class="corner"></i></th>' + columns.map(c => `<th class="${c === "Z" ? "on" : ""}">${c}</th>`).join("") + "</tr></thead><tbody>";
for (let row = 76; row <= 105; row++) {
  const rule = rules[row];
  const ruled = rule ? between(rule[1], rule[2]) : [];
  html += `<tr class="${rule && rule[0] === "thick" ? "tall" : ""}"><th class="${row === 97 ? "on" : ""}">${row}</th>`;
  for (let i = 0; i < columns.length; i++) {
    const [text = "", kind = "", span = 1] = (data[row] || {})[columns[i]] || [];
    const line = ruled.includes(columns[i]) ? rule[0] : "";
    html += `<td class="${kind} ${line}" colspan="${span}">${text}</td>`;
    i += span - 1;
  }
  html += "</tr>";
}
document.querySelector(".cells").innerHTML = html + "</tbody>";

// Scatter markers, in the chart's own coordinates
const upper = [[136,104],[141,102],[149,104],[157,106],[162,101],[166,99],[172,97],[176,95],[182,95],[187,93],[190,93],[194,93],[200,95],[206,95],[212,95],[218,94],[223,91],[227,93],[232,90],[238,90],[242,89],[246,88],[248,91],[289,91]];
const lower = [[136,113],[147,112],[157,113],[164,112],[168,113],[174,109],[182,110],[186,110],[191,112],[196,110],[204,113],[208,108],[214,106],[219,108],[225,112],[229,107],[234,104],[240,101],[246,100],[251,101],[257,97],[263,97],[267,98],[289,97]];
const diamond = ([x, y]) => `<path d="M${x} ${y - 6}l6 6-6 6-6-6z"/>`;
let marks = "";
upper.forEach(([x, y]) => { marks += diamond([x, y - 1]); });
lower.forEach(p => { marks += diamond(p); });
const observed = document.querySelector(".observed");
observed.setAttribute("fill", "#4472c4");
observed.innerHTML = '<path d="M132 107L170 96L246 87L250 97L226 107L205 112L136 113z"/>' + marks;
let squares = "";
for (let x = 136; x <= 268; x += 4) squares += `<rect x="${x - 5}" y="${Math.round(108 - (x - 136) * 0.11) - 6}" width="10" height="11"/>`;
const predicted = document.querySelector(".predicted");
predicted.setAttribute("fill", "#ed7d31");
predicted.innerHTML = squares + '<rect x="284" y="86" width="10" height="10"/>';
```
